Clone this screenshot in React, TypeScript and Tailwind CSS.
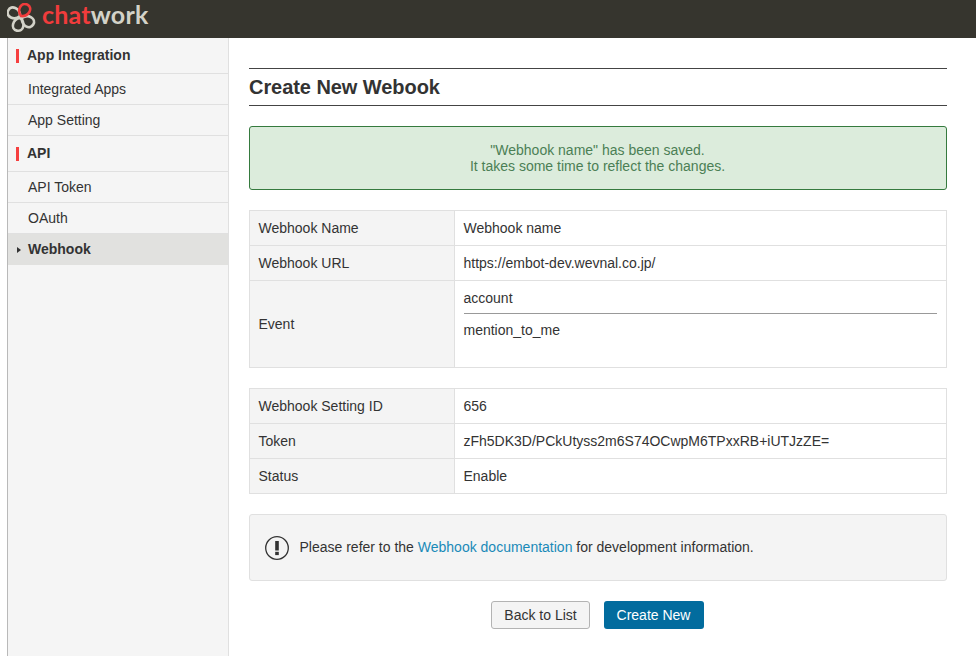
const sans = "font-['Liberation_Sans',Arial,sans-serif]";
const petal = "M0 0C-7 -3 -7 -13 0 -13C7 -13 7 -3 0 0Z";

function Logo() {
  return (
    <div className="flex items-center">
      <svg width="30" height="32" viewBox="0 0 30 32" fill="none" strokeWidth="2.6">
        <path d={petal} stroke="#d3d2c8" transform="translate(13 13) rotate(-65)" />
        <path d={petal} stroke="#d3d2c8" transform="translate(13 15) rotate(-166)" />
        <path d={petal} stroke="#d3d2c8" transform="translate(15 15) rotate(120)" />
        <path d={petal} stroke="#f03c3c" transform="translate(14 13) rotate(30)" />
      </svg>
      <span className="font-['Lato',sans-serif] text-[25px] font-bold leading-none ml-[5px] mb-[9px] tracking-[0.2px]">
        <span className="text-[#f03c3c]">chat</span>
        <span className="text-[#d3d2c8]">work</span>
      </span>
    </div>
  );
}

function SideHead({ label }: { label: string }) {
  return (
    <div className="h-[36px] flex items-center border-b border-[#e0e0e0] pl-[8px]">
      <span className="w-[3px] h-[14px] bg-[#f63f3f] mr-[8px]" />
      <span className="font-bold text-[14px]">{label}</span>
    </div>
  );
}

function SideItem({ label }: { label: string }) {
  return (
    <div className="h-[31px] flex items-center border-b border-[#e0e0e0] pl-[20px] text-[14px]">
      {label}
    </div>
  );
}

function Row({ label, children, tall }: { label: string; children: React.ReactNode; tall?: boolean }) {
  return (
    <div className={`flex border-b border-[#e0e0e0] last:border-b-0 ${tall ? "h-[86px]" : "h-[35px] last:h-[34px]"}`}>
      <div className="w-[205px] shrink-0 bg-[#f4f4f4] border-r border-[#e0e0e0] flex items-center pl-[8.5px]">
        {label}
      </div>
      <div className="flex-1 flex items-center pl-[8.5px] pr-[9px]">{children}</div>
    </div>
  );
}

export default function App() {
  return (
    <div className={`${sans} w-[976px] h-[656px] overflow-hidden flex flex-col bg-white text-[14px] text-[#333]`}>
      <header className="h-[38px] shrink-0 bg-[#36352e] flex items-center pl-[7px]">
        <Logo />
      </header>
      <div className="flex flex-1 min-h-0">
        <aside className="w-[222px] ml-[7px] shrink-0 bg-[#f5f5f5] border-l border-l-[#b9b9b9] border-r border-r-[#e0e0e0]">
          <SideHead label="App Integration" />
          <SideItem label="Integrated Apps" />
          <SideItem label="App Setting" />
          <SideHead label="API" />
          <SideItem label="API Token" />
          <SideItem label="OAuth" />
          <div className="h-[31px] bg-[#e1e1df] flex items-center pl-[9px] font-bold">
            <span className="w-0 h-0 border-y-[3.5px] border-y-transparent border-l-[4px] border-l-[#333] mr-[7px]" />
            Webhook
          </div>
        </aside>
        <main className="flex-1 ml-[20px] mr-[29px] pt-[30px]">
          <h1 className="h-[38px] border-y border-[#444] flex items-center text-[20px] font-bold leading-none tracking-[-0.06px]">
            Create New Webook
          </h1>
          <div className="mt-[20px] h-[64px] rounded-[3px] border border-[#357a3e] bg-[#dcecdc] text-[#4b7f55] flex flex-col items-center justify-center leading-[16px] pr-[1px]">
            <div>"Webhook name" has been saved.</div>
            <div>It takes some time to reflect the changes.</div>
          </div>
          <div className="mt-[20px] border border-[#e0e0e0]">
            <Row label="Webhook Name">Webhook name</Row>
            <Row label="Webhook URL">https://embot-dev.wevnal.co.jp/</Row>
            <Row label="Event" tall>
              <div className="w-full h-full pt-[9px]">
                <div className="h-[24px] border-b border-[#999] leading-[16px]">account</div>
                <div className="mt-[8px] leading-[16px]">mention_to_me</div>
              </div>
            </Row>
          </div>
          <div className="mt-[20px] border border-[#e0e0e0]">
            <Row label="Webhook Setting ID">656</Row>
            <Row label="Token">zFh5DK3D/PCkUtyss2m6S74OCwpM6TPxxRB+iUTJzZE=</Row>
            <Row label="Status">Enable</Row>
          </div>
          <div className="mt-[20px] h-[67px] rounded-[3px] border border-[#e0e0e0] bg-[#f4f4f4] flex items-center pl-[15px]">
            <svg width="24" height="24" viewBox="0 0 24 24" className="mr-[10.5px]">
              <circle cx="12" cy="12" r="11.3" fill="none" stroke="#333" strokeWidth="1.3" />
              <rect x="10.2" y="5" width="3.6" height="9.5" fill="#333" />
              <rect x="10.2" y="15.8" width="3.6" height="3.3" fill="#333" />
            </svg>
            <span>
              Please refer to the <a className="text-[#1a8ab8]">Webhook documentation</a> for development information.
            </span>
          </div>
          <div className="mt-[20px] flex justify-center gap-[14px] pr-[2px]">
            <button type="button" className="h-[28px] w-[99px] pl-[1px] rounded-[3px] border border-[#b3b3b3] bg-[#f4f4f4] text-[#333] text-[14px]">
              Back to List
            </button>
            <button type="button" className="h-[28px] w-[100px] rounded-[3px] bg-[#026c9e] text-white text-[14px]">
              Create New
            </button>
          </div>
        </main>
      </div>
    </div>
  );
}
